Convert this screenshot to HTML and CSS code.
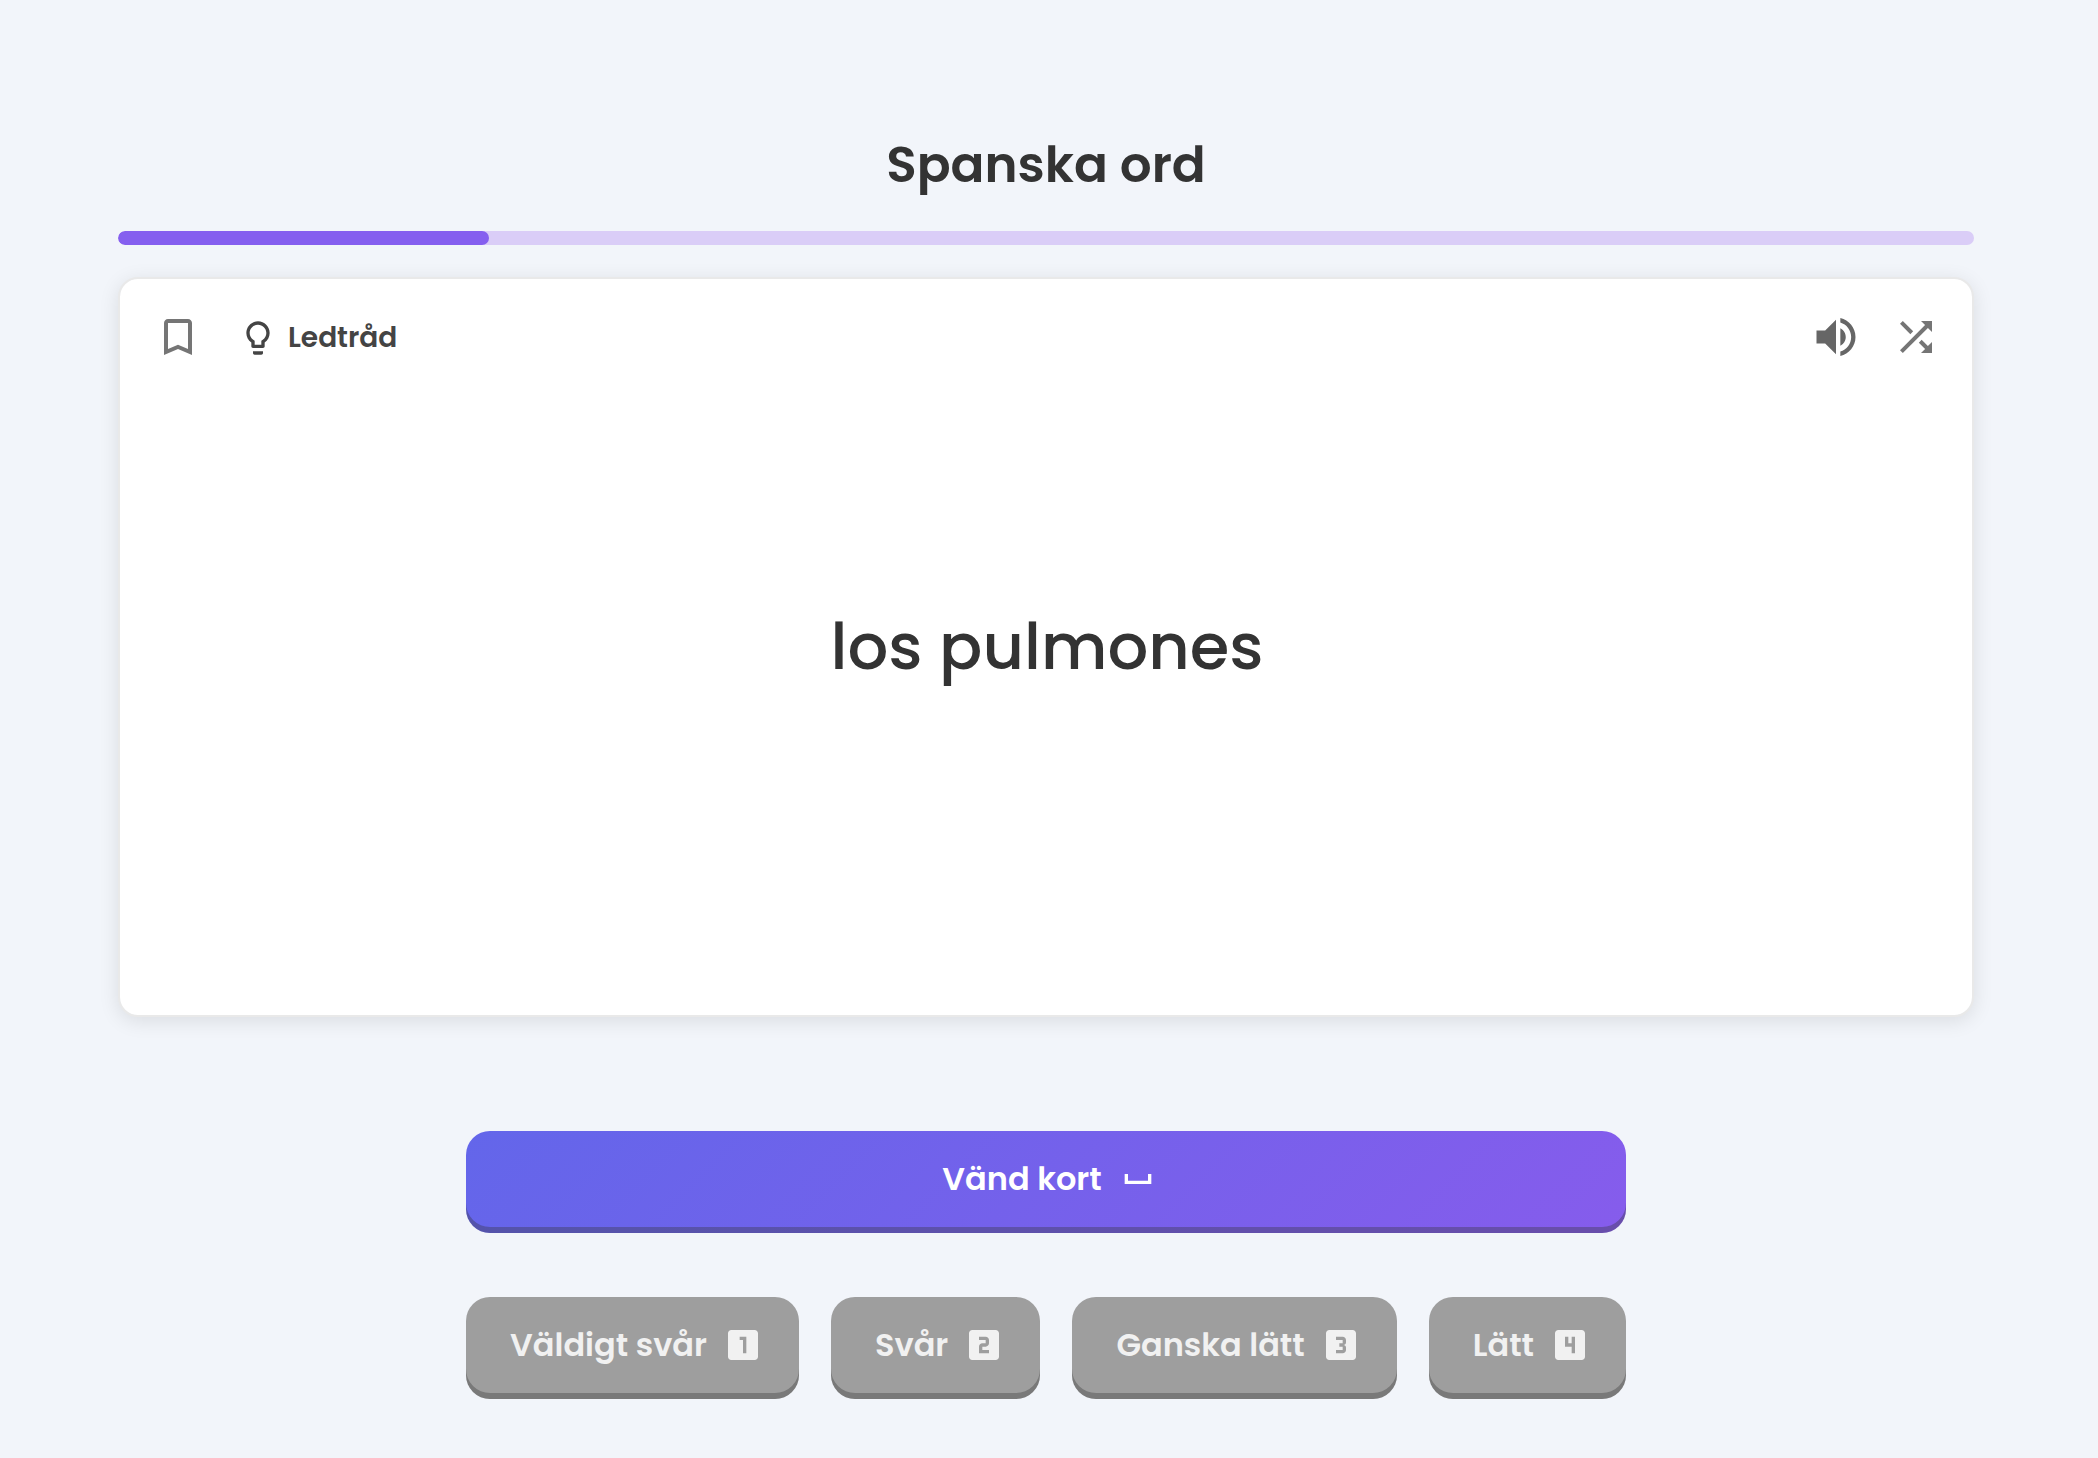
FILE: index.html
```html
<!DOCTYPE html>
<html lang="sv">
<head>
<meta charset="utf-8">
<meta name="viewport" content="width=device-width, initial-scale=1">
<title>Spanska ord</title>
<link rel="stylesheet" href="styles.css">
</head>
<body>
<main class="study">
  <h1 class="study-title">Spanska ord</h1>
  <div class="progress" role="progressbar" aria-valuemin="0" aria-valuemax="100" aria-valuenow="20">
    <div class="progress-fill" style="width: 20%"></div>
  </div>

  <section class="card">
    <header class="card-tools">
      <button class="tool" type="button" aria-label="Bokmärk">
        <svg class="icon-large" viewBox="0 0 24 24"><path d="M17 3H7c-1.1 0-1.99.9-1.99 2L5 21l7-3 7 3V5c0-1.1-.9-2-2-2zm0 15l-5-2.180-5 2.180V5h10v13z"/></svg>
      </button>
      <button class="tool hint" type="button">
        <svg class="icon" viewBox="0 0 24 24"><path d="M9 21c0 .55.45 1 1 1h4c.55 0 1-.45 1-1v-1H9v1zm3-19C8.140 2 5 5.140 5 9c0 2.380 1.190 4.470 3 5.740V17c0 .55.45 1 1 1h6c.55 0 1-.45 1-1v-2.260c1.810-1.270 3-3.360 3-5.740 0-3.860-3.140-7-7-7zm2.850 11.100l-.85.6V16h-4v-2.300l-.85-.6C7.800 12.160 7 10.630 7 9c0-2.760 2.240-5 5-5s5 2.240 5 5c0 1.630-.8 3.160-2.150 4.100z"/></svg>
        Ledtråd
      </button>
      <span class="spacer"></span>
      <button class="tool tool-dark" type="button" aria-label="Lyssna">
        <svg class="icon-sound" viewBox="0 0 24 24"><path d="M3 9v6h4l5 5V4L7 9H3zm13.500 3c0-1.770-1.020-3.290-2.500-4.030v8.050c1.480-.73 2.500-2.250 2.500-4.020zM14 3.230v2.060c2.890.86 5 3.540 5 6.710s-2.110 5.850-5 6.710v2.060c4.010-.91 7-4.490 7-8.770s-2.990-7.860-7-8.770z"/></svg>
      </button>
      <button class="tool" type="button" aria-label="Blanda">
        <svg class="icon-large" viewBox="0 0 24 24"><path d="M10.590 9.170L5.410 4 4 5.410l5.170 5.170 1.420-1.410zM14.500 4l2.040 2.040L4 18.590 5.410 20 17.960 7.460 20 9.500V4h-5.500zm.33 9.410l-1.410 1.410 3.130 3.130L14.500 20H20v-5.500l-2.040 2.040-3.130-3.130z"/></svg>
      </button>
    </header>
    <p class="card-word">los pulmones</p>
  </section>

  <div class="actions">
    <button class="btn btn-primary" type="button">
      Vänd kort
      <svg class="icon" viewBox="0 0 24 24"><path d="M18 9v4H6V9H4v6h16V9z"/></svg>
    </button>
    <div class="grades">
      <button class="btn btn-grade" type="button" disabled>
        Väldigt svår
        <svg class="icon" viewBox="0 0 24 24"><path d="M19 3H5c-1.100 0-2 .9-2 2v14c0 1.100.9 2 2 2h14c1.100 0 2-.9 2-2V5c0-1.100-.9-2-2-2zm-5 14h-2V9h-2V7h4v10z"/></svg>
      </button>
      <button class="btn btn-grade" type="button" disabled>
        Svår
        <svg class="icon" viewBox="0 0 24 24"><path d="M19 3H5c-1.100 0-2 .9-2 2v14c0 1.100.9 2 2 2h14c1.100 0 2-.9 2-2V5c0-1.100-.9-2-2-2zm-4 8c0 1.110-.9 2-2 2h-2v2h4v2H9v-4c0-1.110.9-2 2-2h2V9H9V7h4c1.100 0 2 .89 2 2v2z"/></svg>
      </button>
      <button class="btn btn-grade" type="button" disabled>
        Ganska lätt
        <svg class="icon" viewBox="0 0 24 24"><path d="M19 3H5c-1.100 0-2 .9-2 2v14c0 1.100.9 2 2 2h14c1.100 0 2-.9 2-2V5c0-1.100-.9-2-2-2zm-4 7.500c0 .83-.67 1.500-1.500 1.500.83 0 1.500.67 1.500 1.500V15c0 1.110-.9 2-2 2H9v-2h4v-2h-2v-2h2V9H9V7h4c1.100 0 2 .89 2 2v1.500z"/></svg>
      </button>
      <button class="btn btn-grade" type="button" disabled>
        Lätt
        <svg class="icon" viewBox="0 0 24 24"><path d="M19 3H5c-1.100 0-2 .9-2 2v14c0 1.100.9 2 2 2h14c1.100 0 2-.9 2-2V5c0-1.100-.9-2-2-2zm-4 14h-2v-4H9V7h2v4h2V7h2v10z"/></svg>
      </button>
    </div>
  </div>
</main>
</body>
</html>
```
FILE: styles.css
```css
* {
  box-sizing: border-box;
}

body {
  margin: 0;
  background: #f2f5fa;
  color: #333;
  font-family: Poppins, Inter, "Liberation Sans", sans-serif;
}

button {
  font-family: inherit;
  font-weight: 600;
  border: 0;
  padding: 0;
  background: none;
}

svg {
  display: block;
  flex: none;
  fill: currentColor;
}

.icon {
  width: 40px;
  height: 40px;
}

.icon-large {
  width: 48px;
  height: 48px;
}

.icon-sound {
  width: 52px;
  height: 52px;
}

.study {
  display: flex;
  flex-direction: column;
  min-height: 100vh;
  padding: 135px 124px 59px 118px;
}

.study-title {
  margin: 0 0 36px;
  font-size: 50px;
  line-height: 60px;
  font-weight: 600;
  text-align: center;
}

.progress {
  height: 14px;
  margin-bottom: 32px;
  border-radius: 7px;
  background: #dacdf7;
  overflow: hidden;
}

.progress-fill {
  height: 100%;
  border-radius: 7px;
  background: #855fef;
}

.card {
  flex: 1;
  display: grid;
  grid-template-rows: 1fr auto 1fr;
  padding: 0 32px 0 34px;
  border: 2px solid #e9e9e9;
  border-radius: 20px;
  background: #fff;
  background-clip: padding-box;
  box-shadow: 0 4px 20px rgba(0, 0, 0, 0.1);
}

.card-tools {
  display: flex;
  align-items: center;
  align-self: start;
  padding-top: 32px;
}

.tool {
  display: flex;
  align-items: center;
  color: #757575;
}

.tool-dark {
  margin-right: 30px;
  color: #666;
}

.hint {
  gap: 10px;
  margin-left: 36px;
  padding-top: 2px;
  color: #444;
  font-size: 28px;
  line-height: 40px;
}

.spacer {
  flex: 1;
}

.card-word {
  margin: 0;
  font-size: 64px;
  line-height: 96px;
  font-weight: 500;
  text-align: center;
}

.actions {
  display: flex;
  flex-direction: column;
  gap: 64px;
  width: 100%;
  max-width: 1160px;
  margin: 114px auto 0;
}

.grades {
  display: flex;
  flex-wrap: wrap;
  gap: 32px;
}

.btn {
  display: flex;
  align-items: center;
  justify-content: center;
  gap: 16px;
  padding: 24px 36px 30px 44px;
  border-radius: 24px;
  box-shadow: inset 0 -6px rgba(51, 51, 51, 0.35);
  font-size: 32px;
  line-height: 48px;
}

.btn-primary {
  background: linear-gradient(135deg, #6366ea, #865cec);
  color: #fff;
}

.btn-grade {
  flex: 1 1 auto;
  background: #9e9e9e;
  color: #f1f1f1;
}
```
